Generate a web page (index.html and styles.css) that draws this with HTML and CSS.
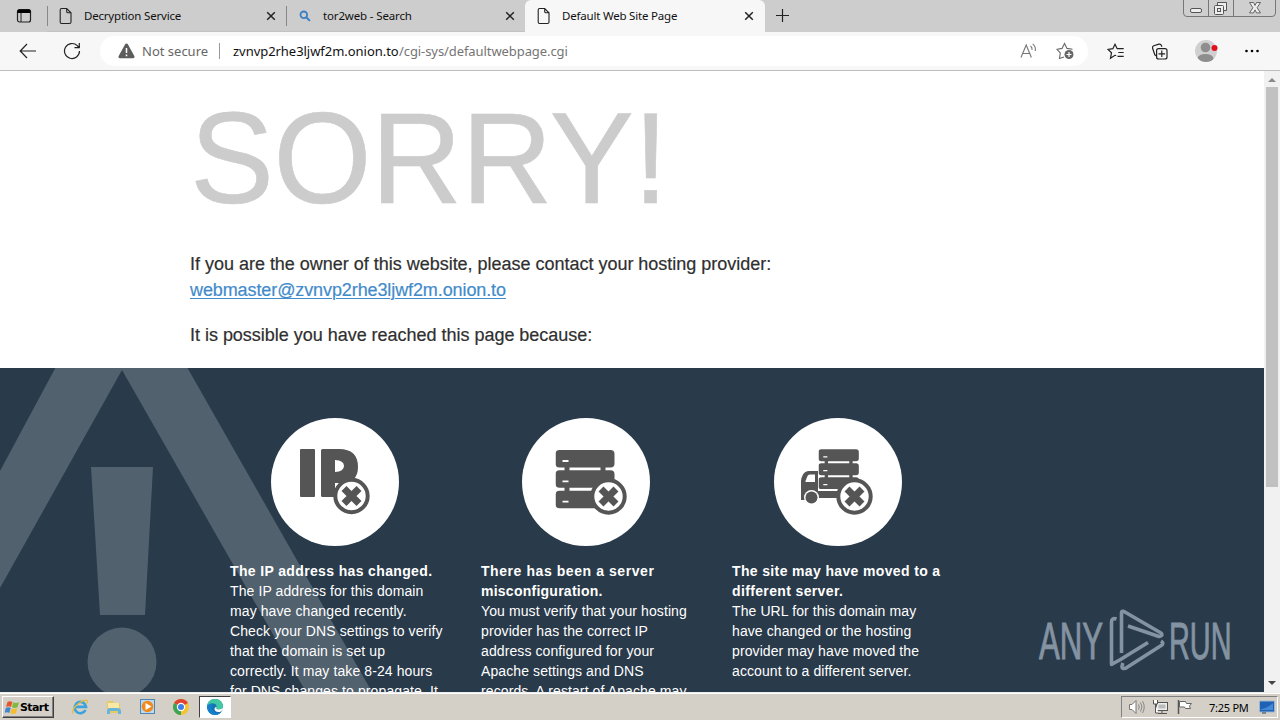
FILE: index.html
```html
<!DOCTYPE html>
<html lang="en">
<head>
<meta charset="utf-8">
<title>Default Web Site Page</title>
<link rel="stylesheet" href="styles.css">
</head>
<body>
<svg class="defs" width="0" height="0">
  <defs>
    <symbol id="doc" viewBox="0 0 14 18"><path d="M2.500 1.500h5.200l4.300 4.300v9.200q0 1.500-1.500 1.500h-8q-1.300 0-1.300-1.500v-12q0-1.500 1.300-1.500zM7.700 1.500v3q0 1.300 1.300 1.300h3" fill="none" stroke="#222" stroke-width="1.100"/></symbol>
    <symbol id="close" viewBox="0 0 10 10"><path d="M1.200 1.200l7.600 7.600M8.800 1.200L1.200 8.800" stroke="#222" stroke-width="1.500"/></symbol>
    <symbol id="cross" viewBox="0 0 38 38"><circle cx="19" cy="19" r="16.200" fill="#fff" stroke="#555" stroke-width="4"/><path d="M11.500 11.500l15 15M26.500 11.500l-15 15" stroke="#555" stroke-width="7"/></symbol>
    <symbol id="rack" viewBox="0 0 60 59"><path d="M9 10h5v40H9zM45 10h5v40h-5z" fill="#555"/><g fill="#555"><rect x="0" y="0" width="59" height="17.500" rx="4"/><rect x="0" y="20.300" width="59" height="17.500" rx="4"/><rect x="0" y="40.700" width="59" height="17.500" rx="4"/></g><path d="M7 11h6M7 31.300h6M7 51.700h6" stroke="#fff" stroke-width="1.800"/></symbol>
  </defs>
</svg>
<div class="screen">
  <header class="tabs">
    <div class="lead"><svg width="16" height="16" viewBox="0 0 16 16"><rect x="1.500" y="1.500" width="13" height="12.500" rx="2" fill="none" stroke="#222" stroke-width="1.200"/><path d="M1.500 3.200q0-1.700 1.700-1.700h9.600q1.700 0 1.700 1.700V5h-13z"/><path d="M5 5v9" stroke="#222"/></svg></div>
    <div class="tab first"><svg class="doc" width="14" height="18"><use href="#doc"/></svg><span class="t1">Decryption Service</span><svg class="x" width="10" height="10"><use href="#close"/></svg></div>
    <div class="tab second"><svg class="mag" width="12" height="12" viewBox="0 0 12 12"><circle cx="4.800" cy="4.800" r="3.300" fill="none" stroke="#3b7fc4" stroke-width="1.800"/><path d="M7.300 7.300l3.600 3.600" stroke="#3b7fc4" stroke-width="2"/></svg><span class="t2">tor2web - Search</span><svg class="x" width="10" height="10"><use href="#close"/></svg></div>
    <div class="tab active"><svg class="doc" width="14" height="18"><use href="#doc"/></svg><span class="t3">Default Web Site Page</span><svg class="x" width="10" height="10"><use href="#close"/></svg></div>
    <svg class="plus" width="15" height="15" viewBox="0 0 15 15"><path d="M7.500 1v13M1 7.500h13" stroke="#222" stroke-width="1.200"/></svg>
    <div class="winbtns">
      <svg width="94" height="18" viewBox="0 0 94 18"><path d="M.5 0v13q0 3.500 3.500 3.500h85q3.500 0 3.500-3.500V0M25.500 0v16M50.500 0v16" fill="#cfcfcf" stroke="#777"/><rect x="7.500" y="8.500" width="11" height="4" rx="1.500" fill="#eee" stroke="#555"/><path d="M34.500 5.500v-3h9v8h-3" fill="#eee" stroke="#555"/><rect x="31.500" y="5.500" width="9" height="9" rx="1" fill="#eee" stroke="#555"/><rect x="34.500" y="8.500" width="3" height="3" fill="none" stroke="#555"/><path d="M66.500 2.500h4l1.500 3 1.500-3h4l-3.400 5.200 3.400 5.200h-4l-1.500-3-1.500 3h-4l3.400-5.200z" fill="#eee" stroke="#666"/></svg>
    </div>
  </header>
  <nav class="toolbar">
    <svg class="back" width="18" height="16" viewBox="0 0 18 16"><path d="M17 8H1.500M8 1L1.200 8 8 15" fill="none" stroke="#222" stroke-width="1.200"/></svg>
    <svg class="reload" width="18" height="18" viewBox="0 0 18 18"><path d="M16.500 9A7.500 7.500 0 1 1 14.300 3.700L16 5.500M16.300 1v4.700h-4.800" fill="none" stroke="#222" stroke-width="1.200"/></svg>
    <div class="address">
      <svg class="warn" width="17" height="16" viewBox="0 0 17 16"><path d="M8.500 .5q1 0 1.500 1l6.300 11.500q.8 2-1.100 2.200H1.800Q-.2 15 .7 13L7 1.500q.5-1 1.500-1z" fill="#5c5c5c"/><path d="M8.500 5v5M8.500 11.500v1.700" stroke="#fff" stroke-width="1.500"/></svg>
      <span class="ns">Not secure</span><i class="bar"></i><span class="url">zvnvp2rhe3ljwf2m.onion.to</span><span class="path">/cgi-sys/defaultwebpage.cgi</span>
      <svg class="read" width="18" height="16" viewBox="0 0 18 16"><path d="M1 14.500L6.200 2l5.200 12.500M3 10.500h6.500M10.500 3q2 1.500 1.500 4M12.700 .8q3.500 3 2.500 7.200" fill="none" stroke="#777" stroke-width="1.100"/></svg>
      <svg class="fav" width="19" height="18" viewBox="0 0 19 18"><path d="M8 15L3.500 16.500l.8-5.500L1 7.300l5-.9L8.500 1.500l2.500 4.900 5.500.9" fill="none" stroke="#666" stroke-width="1.100"/><circle cx="13" cy="12.500" r="4.500" fill="#666"/><path d="M13 10v5M10.500 12.500h5" stroke="#fff" stroke-width="1.200"/></svg>
    </div>
    <svg class="favs" width="18" height="17" viewBox="0 0 18 17"><path d="M9.200 12.500L8 12.300l-4.500 3 1-5.600L1 6.400l4.900-.7L8 1.300l2.200 4.400h6.500M11.300 9.500h5.400M10.500 13.300h6.200" fill="none" stroke="#222" stroke-width="1.200"/></svg>
    <svg class="coll" width="17" height="17" viewBox="0 0 17 17"><path d="M3.700 11.500L1.600 5.300Q1 3.500 2.700 2.800L8 1.200q1.700-.4 2.400 1.200l.5 1.400M3.700 11.500q.4 1.200 1.800 1" fill="none" stroke="#222" stroke-width="1.200"/><rect x="5.600" y="5.600" width="10.400" height="10.400" rx="2" fill="#f7f7f7" stroke="#222" stroke-width="1.200"/><path d="M10.800 7.500v6.600M7.500 10.800h6.600" stroke="#222" stroke-width="1.200"/></svg>
    <svg class="avatar" width="24" height="24" viewBox="0 0 24 24"><clipPath id="av"><circle cx="12" cy="12" r="11"/></clipPath><circle cx="12" cy="12" r="11" fill="#d0d0d0"/><g fill="#8e8e8e" clip-path="url(#av)"><circle cx="11.500" cy="8.500" r="4.800"/><ellipse cx="11.500" cy="19.500" rx="8" ry="4.500"/></g><circle cx="20.500" cy="9" r="3" fill="#e1111b"/></svg>
    <svg class="dots" width="16" height="4" viewBox="0 0 16 4"><circle cx="2.500" cy="2" r="1.300"/><circle cx="8" cy="2" r="1.300"/><circle cx="13.500" cy="2" r="1.300"/></svg>
  </nav>
  <main class="view">
    <div class="page">
      <section class="top">
        <h1>SORRY!</h1>
        <p class="owner">If you are the owner of this website, please contact your hosting provider:</p>
        <p><a class="mail">webmaster@zvnvp2rhe3ljwf2m.onion.to</a></p>
        <p class="because">It is possible you have reached this page because:</p>
      </section>
      <section class="reasons">
        <svg class="alert" width="400" height="324" viewBox="0 0 400 324"><path d="M55.300 0H187.500L372 324H306L122 2 0 220V103z M91 99h62l-8 148h-45z" fill="#52616e"/><circle cx="122" cy="294" r="34.500" fill="#52616e"/></svg>
        <div class="col c1">
          <svg class="round" width="128" height="128" viewBox="0 0 128 128"><circle cx="64" cy="64" r="64" fill="#fff"/><rect x="29" y="31" width="15" height="48" rx="1" fill="#555"/><path d="M50 32.500q0-1.500 1.500-1.500H68q19 0 19 18 0 16-17 16h-6v14H51.500Q50 79 50 77.500zM64 42v12q9-.5 9-6t-9-6z" fill="#555" fill-rule="evenodd"/><use href="#cross" x="61.500" y="59" width="38" height="38"/></svg>
          <h2>The IP address has changed.</h2>
          <p>The IP address for this domain<br>may have changed recently.<br>Check your DNS settings to verify<br>that the domain is set up<br>correctly. It may take 8-24 hours<br>for DNS changes to propagate. It</p>
        </div>
        <div class="col c2">
          <svg class="round" width="128" height="128" viewBox="0 0 128 128"><circle cx="64" cy="64" r="64" fill="#fff"/><use href="#rack" x="33.500" y="32" width="60" height="59"/><use href="#cross" x="67.500" y="59.500" width="38" height="38"/></svg>
          <h2><span class="wide">There has been a server</span><br>misconfiguration.</h2>
          <p>You must verify that your hosting<br>provider has the correct IP<br>address configured for your<br>Apache settings and DNS<br>records. A restart of Apache may</p>
        </div>
        <div class="col c3">
          <svg class="round" width="128" height="128" viewBox="0 0 128 128"><circle cx="64" cy="64" r="64" fill="#fff"/><use href="#rack" x="44.500" y="31" width="41" height="41"/><path d="M27 82V63q0-3 2-6.500Q31 53 35 53h9v20h20v7H44q-4-5-10 0v2zM31.500 64v-1l2-5q.7-1.500 2-1.500H41V64z" fill="#555" fill-rule="evenodd"/><circle cx="37.500" cy="79.500" r="7.500" fill="#fff"/><circle cx="37.500" cy="79.500" r="6" fill="#555"/><use href="#cross" x="61.500" y="59.500" width="38" height="38"/></svg>
          <h2>The site may have moved to a<br>different server.</h2>
          <p>The URL for this domain may<br>have changed or the hosting<br>provider may have moved the<br>account to a different server.</p>
        </div>
        <div class="anyrun">
          <span class="any">ANY</span>
          <svg width="56" height="64" viewBox="0 0 56 64"><g fill="none" stroke="#8493a1" stroke-width="3.600" stroke-linejoin="round"><path d="M7.500 10Q2.500 8.500 2.500 13v42.500l9-5L39 33.500"/><path d="M12.500 44V4q0-2.500 2.500-1.500L52 24q2.500 3-2 3.500L19 17"/><path d="M14 54q-3 7 3 5l36-23q2-2-1-4"/></g></svg>
          <span class="run">RUN</span>
        </div>
      </section>
    </div>
    <aside class="scroll">
      <svg width="16" height="16" viewBox="0 0 16 16"><path d="M4 11h8L8 7z" fill="#8a8a8a"/></svg>
      <div class="thumb"></div>
      <svg class="down" width="16" height="16" viewBox="0 0 16 16"><path d="M4 5h8l-4 4z" fill="#444"/></svg>
    </aside>
  </main>
  <footer class="taskbar">
    <div class="start"><svg width="15" height="15" viewBox="0 0 15 15"><path d="M2.500 2Q5 .5 7.300 2L6 7Q3.500 5.500 1 7z" fill="#e8542a"/><path d="M8.200 2.300q2.500 1.500 5.800 0L12.500 7.300Q9.500 8.500 7 7.200z" fill="#80b93b"/><path d="M.8 8Q3.500 6.700 5.700 8L4.300 13Q2 11.700-.5 13z" fill="#3f86d0"/><path d="M6.700 8.200q2.500 1.500 5.500 0L11 13.200q-3 1.300-5.700 0z" fill="#f5bd2c"/></svg><span>Start</span></div>
    <svg class="ie" width="18" height="18" viewBox="0 0 18 18"><path d="M14.500 12A5.700 5.700 0 1 1 15 8.800H5" fill="none" stroke="#3ba4dc" stroke-width="2.700"/><path d="M2 15.500Q.5 11 7 6t9-3.500q1 .8 0 3" fill="none" stroke="#e9bc37" stroke-width="1.300"/></svg>
    <svg class="folder" width="18" height="18" viewBox="0 0 18 18"><path d="M2 3h6l1 2h6v10H2z" fill="#e7c965"/><path d="M3 5h11v5H3z" fill="#f9e9a5"/><path d="M2 16v-3q0-3 3-3h7q4 0 4 3v3h-3v-3H5v3z" fill="#67b6d8"/></svg>
    <svg class="media" width="18" height="18" viewBox="0 0 18 18"><rect x="1.500" y="1.500" width="14" height="14" fill="#bdd9ee" stroke="#5086b5"/><circle cx="8.500" cy="8.500" r="5.800" fill="#f08a1c"/><path d="M6.500 5l6 3.500-6 3.500z" fill="#fff"/></svg>
    <svg class="chrome" width="18" height="18" viewBox="0 0 18 18"><circle cx="9" cy="9" r="8" fill="#f4c430"/><path d="M9 9L2.070 5A8 8 0 0 1 15.930 5z" fill="#df4332"/><path d="M9 9L9 17A8 8 0 0 1 2.070 5z" fill="#3ba457"/><circle cx="9" cy="9" r="4.200" fill="#fff"/><circle cx="9" cy="9" r="3" fill="#3f7ee8"/></svg>
    <div class="edgebtn"><svg width="18" height="18" viewBox="0 0 18 18"><circle cx="9" cy="9" r="8" fill="#1573b8"/><path d="M1 8Q2 1 9 1t8 7q-.3 3.500-4.500 3.500-3 0-2-2.500Q11 5.500 7 5.500T1 8z" fill="#43c9a2"/><path d="M1 8q2.500-3.500 6-2.500Q4 9 7 13t8.300.7Q12.500 17.300 8 17 1 15.500 1 8z" fill="#167fc9"/><path d="M10.500 9q-1 2.500 2 2.500T17 9.500q.2 3-2.500 4.300-5.500 1-6-2.800Q8.500 9 10.500 9z" fill="#fff"/></svg></div>
    <div class="tray">
      <svg width="18" height="16" viewBox="0 0 18 16"><path d="M1.500 5.500H4l4-4v13l-4-4H1.500z" fill="#fff" stroke="#777"/><path d="M10.500 5.500q1.500 2.500 0 5M12.500 3.500q3 4.500 0 9M14.500 2q3.500 6 0 12" fill="none" stroke="#888"/></svg>
      <svg width="18" height="16" viewBox="0 0 18 16"><rect x="4.500" y="3.500" width="11" height="8" fill="#eee" stroke="#555"/><rect x="6.500" y="5.500" width="7" height="4" fill="#bbb"/><path d="M10 12v2M6 14.500h9" stroke="#555"/><path d="M1.500 1v4h4V1M3.500 5v9h3" fill="#fff" stroke="#555"/></svg>
      <svg width="18" height="16" viewBox="0 0 18 16"><path d="M2.500 1v14" stroke="#555" stroke-width="1.500"/><path d="M3.500 2.500h6l1 2h5L13.500 7l1 2.500h-5l-1-1.500h-5z" fill="#fff" stroke="#666"/></svg>
      <time>7:25 PM</time>
      <svg class="desk" width="17" height="14" viewBox="0 0 17 14"><rect x=".5" y="1" width="15" height="11" rx="1" fill="#1f61b4" stroke="#9db6d1"/><path d="M2 9q7-1 12-6v7H2z" fill="#4489d4"/><path d="M3 13h4" stroke="#345"/></svg>
    </div>
  </footer>
</div>
</body>
</html>
```
FILE: styles.css
```css
* { box-sizing: border-box; }
body { margin: 0; font-family: "Liberation Sans", Arial, sans-serif; }
h1, h2, p { margin: 0; font-weight: normal; }
svg { display: block; flex: none; }
.defs { position: absolute; }
.screen { width: 1280px; height: 720px; display: flex; flex-direction: column; overflow: hidden; background: #fff; }

.tabs { height: 32px; flex: none; display: flex; background: #cdcdcd; font: 12px/32px "Noto Sans", sans-serif; color: #111; }
.lead { width: 47px; padding: 8px 0 0 16px; }
.tab { display: flex; align-items: center; white-space: nowrap; }
.first, .second { border-bottom: 1px solid #c2c2c2; }
.first { width: 240px; padding-left: 12px; position: relative; }
.first::before, .first::after { content: ""; position: absolute; top: 6px; height: 20px; width: 1px; background: #888; }
.first::before { left: 0; }
.first::after { right: 0; }
.second { width: 238px; padding-left: 12px; }
.active { width: 240px; padding-left: 12px; background: #f7f7f7; border-radius: 6px 6px 0 0; }
.x { margin-left: auto; margin-right: 11px; }
.second .x { margin-right: 10px; }
.doc { margin-right: 11px; }
.mag { margin-right: 12px; }
.t1 { font-size: 11.500px; letter-spacing: -.2px; }
.t2 { font-size: 11.500px; letter-spacing: -.15px; }
.t3 { font-size: 11.500px; letter-spacing: -.2px; }
.plus { margin: 8px 0 0 10px; }
.winbtns { margin-left: auto; margin-right: 3px; }

.toolbar { height: 39px; flex: none; display: flex; align-items: center; background: #f7f7f7; border-bottom: 1px solid #bdbdbd; padding-left: 19px; }
.reload { margin-left: 26px; }
.address { display: flex; align-items: center; width: 988px; height: 30px; margin-left: 19px; padding-left: 18px; border-radius: 15px; background: #fff; font: 13px/30px "Noto Sans", sans-serif; white-space: nowrap; }
.ns { margin-left: 7px; color: #666; width: 67px; }
.bar { width: 1px; height: 16px; background: #999; margin: 0 13px 0 10px; }
.url { color: #111; width: 166px; letter-spacing: -.04px; }
.path { color: #757575; letter-spacing: -.08px; }
.read { margin-left: auto; }
.fav { margin: 0 13px 0 18px; }
.favs { margin-left: 19px; }
.coll { margin-left: 26px; }
.avatar { margin-left: 26px; }
.dots { margin-left: 26px; }

.view { display: flex; height: 621px; flex: none; }
.page { width: 1264px; height: 621px; overflow: hidden; }
.top { height: 297px; padding: 14px 0 0 190px; font-size: 18px; line-height: 26px; color: #2f2f2f; white-space: nowrap; }
.top p { -webkit-text-stroke: .2px currentColor; }
.top h1 { font-size: 126px; line-height: 149px; height: 166px; color: #ccc; transform: scaleY(1.035); transform-origin: 0 118px; -webkit-text-stroke: .6px #ccc; letter-spacing: -.5px; }
.owner { letter-spacing: -.015px; }
.mail { color: #428bca; text-decoration: underline; text-underline-offset: 2px; text-decoration-thickness: 1px; letter-spacing: -.1px; }
.because { margin-top: 19px; letter-spacing: -.02px; }
.reasons { height: 324px; position: relative; display: flex; padding: 50px 0 0 230px; background: #293a4a; color: #fff; font-size: 14px; line-height: 20px; white-space: nowrap; overflow: hidden; }
.alert { position: absolute; left: 0; top: 0; }
.col { position: relative; width: 251px; flex: none; }
.col h2 { font-size: 14px; line-height: 20px; font-weight: bold; margin-top: 15px; letter-spacing: .36px; }
.c2 h2 { letter-spacing: .25px; }
.wide { letter-spacing: .57px; }
.col p { letter-spacing: .1px; }
.round { margin-left: 41px; }
.c3 .round { margin-left: 42px; }
.anyrun { position: absolute; left: 1039px; top: 241px; display: flex; align-items: center; color: #8493a1; font-size: 52px; line-height: 64px; }
.anyrun span { transform-origin: 0 50%; transform: scaleX(.6); -webkit-text-stroke: 1px #8493a1; }
.any { width: 70px; }
.anyrun svg { margin-right: 4px; }
.anyrun .run { width: 62px; transform: scaleX(.555); }
.scroll { width: 16px; background: #f1f1f1; display: flex; flex-direction: column; }
.thumb { width: 12px; height: 400px; margin-left: 2px; background: #c1c1c1; }
.down { margin-top: auto; }

.taskbar { height: 28px; flex: none; display: flex; align-items: center; background: #d4d0c8; border-top: 1px solid #eee; box-shadow: inset 0 1px #fff; padding: 1px 2px 0; }
.start { width: 52px; height: 22px; display: flex; align-items: center; padding-left: 2px; border: 1px solid; border-color: #fff #404040 #404040 #fff; box-shadow: inset -1px -1px #808080; font: bold 11px "DejaVu Sans", sans-serif; letter-spacing: -.6px; color: #000; }
.ie { margin-left: 17px; }
.folder { margin-left: 16px; }
.media { margin-left: 16px; }
.chrome { margin-left: 15px; }
.edgebtn { margin-left: 9px; width: 32px; height: 22px; background: #fff; border: 1px solid; border-color: #404040 #fff #fff #404040; display: flex; align-items: center; justify-content: center; }
.tray { margin-left: auto; width: 157px; height: 22px; display: flex; align-items: center; border: 1px solid; border-color: #808080 #fff #fff #808080; padding-left: 6px; gap: 6px; }
.tray time { width: 42px; margin-left: 9px; font: 11px "Noto Sans", sans-serif; letter-spacing: -.25px; white-space: nowrap; color: #000; }
.desk { margin-left: 2px; }
```
